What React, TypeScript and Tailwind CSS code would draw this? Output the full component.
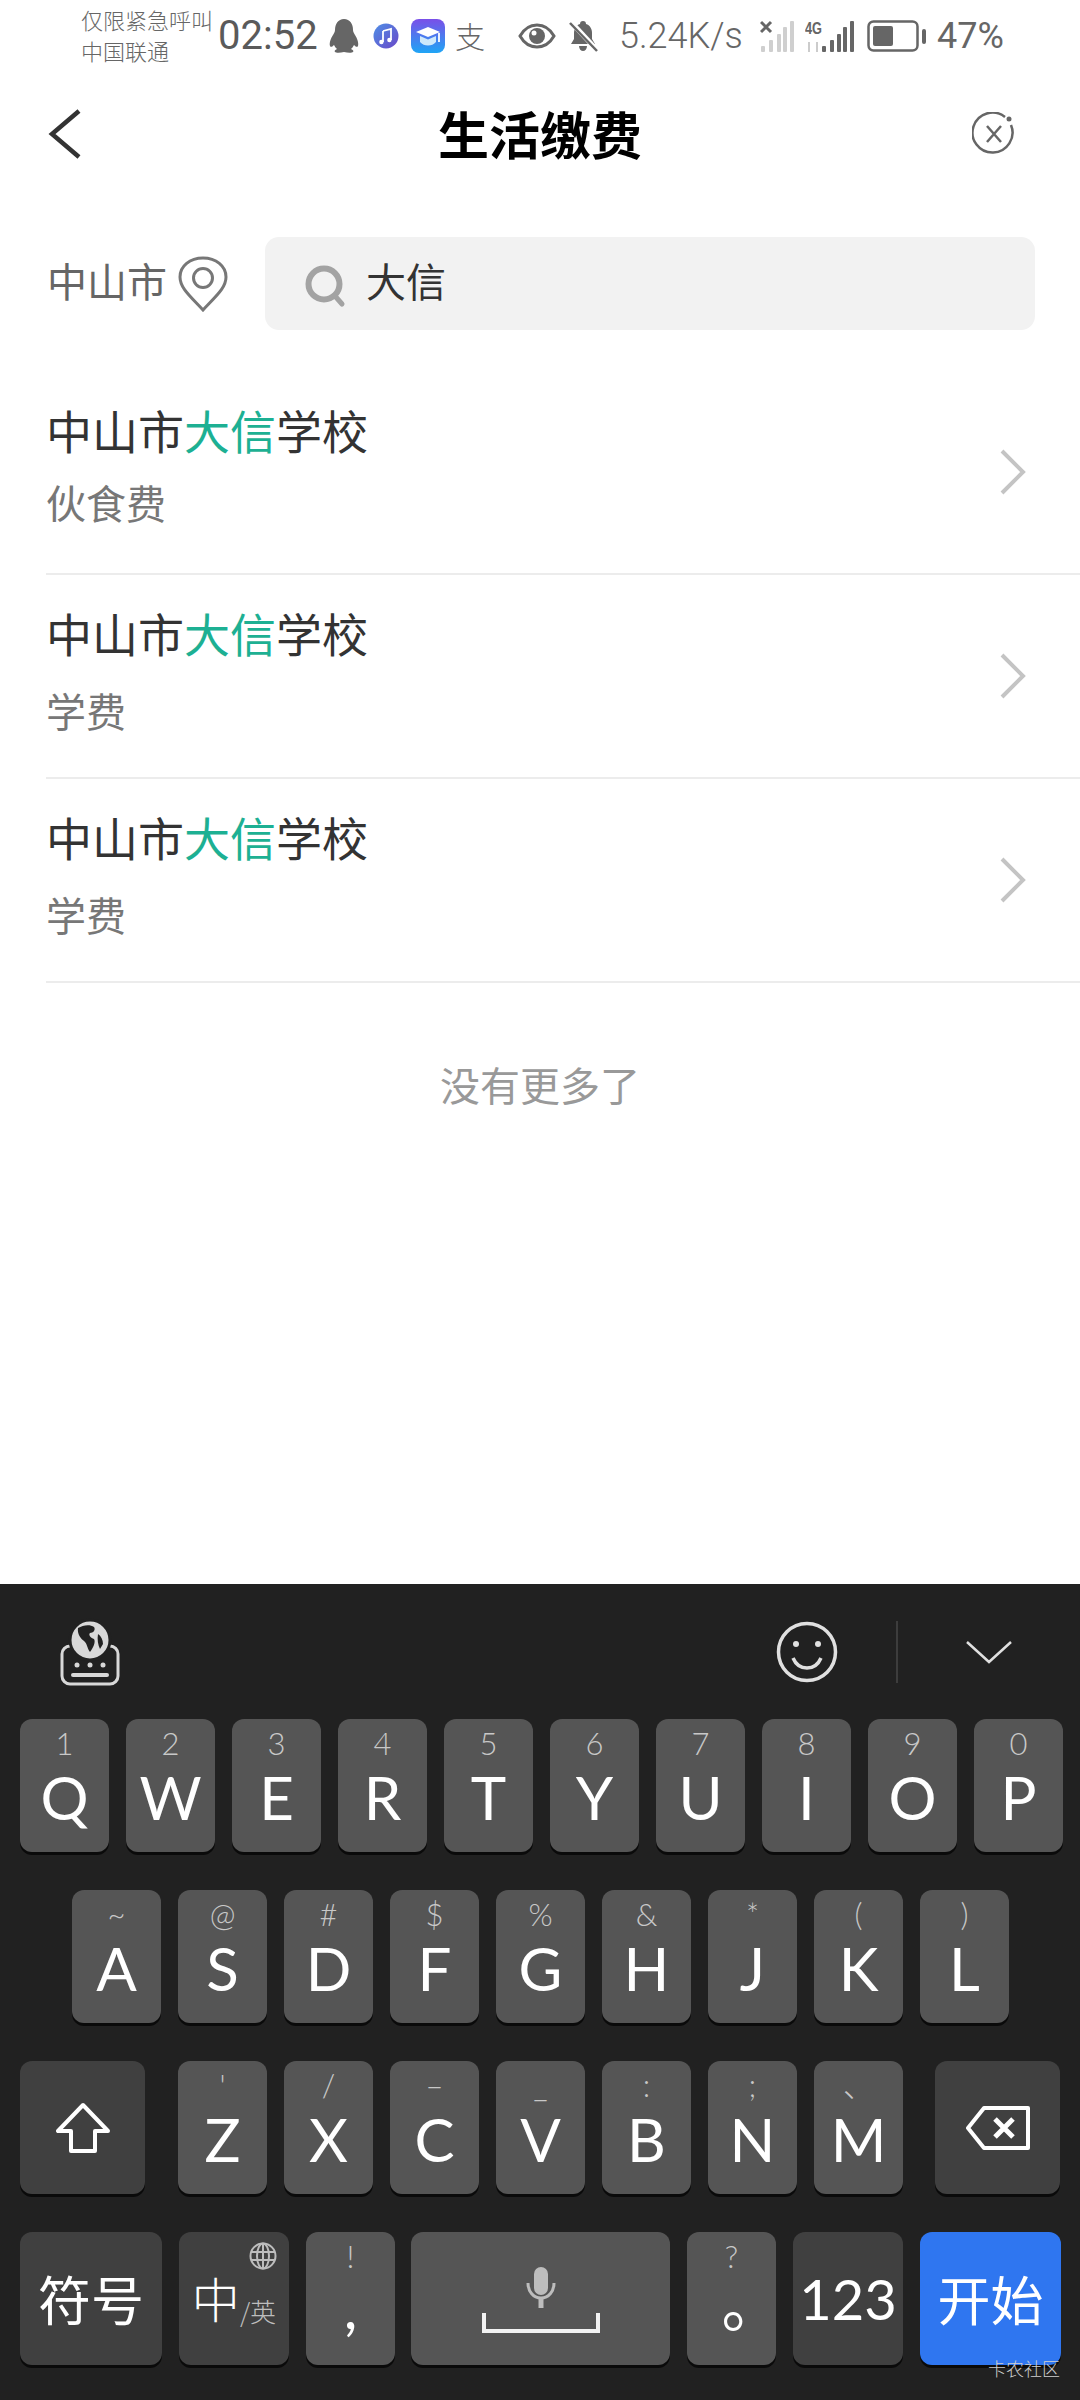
import { ReactNode } from 'react';

const cjk = "font-['Noto_Sans_CJK_SC','Noto_Sans',sans-serif]";
const latin = "font-['Lato','Noto_Sans_CJK_SC',sans-serif]";

const results = [
  { sub: '伙食费', top: 'pt-[28px]', subGap: 'mt-[13px]' },
  { sub: '学费', top: 'pt-[27px]', subGap: 'mt-[18px]' },
  { sub: '学费', top: 'pt-[27px]', subGap: 'mt-[18px]' },
];

const row1 = [['1', 'Q'], ['2', 'W'], ['3', 'E'], ['4', 'R'], ['5', 'T'], ['6', 'Y'], ['7', 'U'], ['8', 'I'], ['9', 'O'], ['0', 'P']];
const row2 = [['~', 'A'], ['@', 'S'], ['#', 'D'], ['$', 'F'], ['%', 'G'], ['&', 'H'], ['*', 'J'], ['(', 'K'], [')', 'L']];
const row3 = [["'", 'Z'], ['/', 'X'], ['–', 'C'], ['_', 'V'], [':', 'B'], [';', 'N'], ['、', 'M']];

function LetterKey({ top, main, mainClass = '' }: { top: string; main: string; mainClass?: string }) {
  return (
    <div className={`flex h-[133px] w-[89px] shrink-0 flex-col items-center rounded-[12px] bg-[#555555] shadow-[0_3px_0_#0a0a0a] ${latin}`}>
      <div className="mt-[8px] h-[32px] text-[31px] font-light leading-[32px] text-[#c8c8c8]">{top}</div>
      <div className={`h-[76px] text-[60px] font-normal leading-[76px] text-white ${mainClass}`}>{main}</div>
    </div>
  );
}

function FnKey({ width, children, className = 'bg-[#404040]' }: { width: string; children: ReactNode; className?: string }) {
  return (
    <div className={`relative flex h-[133px] shrink-0 items-center justify-center rounded-[12px] shadow-[0_3px_0_#0a0a0a] ${width} ${className}`}>
      {children}
    </div>
  );
}

function Penguin() {
  return (
    <svg width="30" height="34" viewBox="0 0 30 34" fill="#666">
      <path d="M15 0c-6 0-9 5-9 11 0 2-1 3-2 5-2 3-4 8-3 11 1 2 3 0 4-1 1 2 2 3 3 4-2 1-3 2-2 3 1 1 5 1 9 0 4 1 8 1 9 0 1-1 0-2-2-3 1-1 2-2 3-4 1 1 3 3 4 1 1-3-1-8-3-11-1-2-2-3-2-5 0-6-3-11-9-11z" />
    </svg>
  );
}

function MusicIcon() {
  return (
    <svg width="26" height="28" viewBox="0 0 26 28">
      <defs>
        <linearGradient id="mus" x1="0" y1="0" x2="1" y2="1">
          <stop offset="0" stopColor="#4f8fe6" />
          <stop offset="1" stopColor="#6a48c8" />
        </linearGradient>
      </defs>
      <circle cx="13" cy="14" r="12.5" fill="url(#mus)" />
      <path d="M10 9l8-2v11" stroke="#fff" strokeWidth="1.8" fill="none" />
      <path d="M10 9v11" stroke="#fff" strokeWidth="1.8" fill="none" />
      <circle cx="8.4" cy="20" r="2.2" fill="#fff" />
      <circle cx="16.4" cy="18" r="2.2" fill="#fff" />
    </svg>
  );
}

function CapIcon() {
  return (
    <svg width="34" height="34" viewBox="0 0 34 34">
      <defs>
        <linearGradient id="cap" x1="0" y1="0" x2="0" y2="1">
          <stop offset="0" stopColor="#7a4fe8" />
          <stop offset="1" stopColor="#1fa5f5" />
        </linearGradient>
      </defs>
      <rect width="34" height="34" rx="8" fill="url(#cap)" />
      <path d="M5 13l12-5 12 5-12 5z" fill="#fff" />
      <path d="M9 17v6c2 2.500 5 3.500 8 3.500s6-1 8-3.500v-6l-8 3.500z" fill="#cfe9fb" />
      <path d="M28 14v9" stroke="#fff" strokeWidth="1.800" />
    </svg>
  );
}

function EyeIcon() {
  return (
    <svg width="38" height="26" viewBox="0 0 38 26">
      <path d="M2 13C6 6 12 2 19 2s13 4 17 11c-4 7-10 11-17 11S6 20 2 13z" fill="none" stroke="#666" strokeWidth="3" />
      <circle cx="19" cy="13" r="8" fill="#666" />
      <circle cx="16" cy="10" r="2.500" fill="#fff" />
    </svg>
  );
}

function BellOff() {
  return (
    <svg width="30" height="32" viewBox="0 0 30 32" fill="#666">
      <path d="M15 1c-2 0-3 1-3 3-4 1-6 5-6 9v6l-3 5h24l-3-5v-6c0-4-2-8-6-9 0-2-1-3-3-3z" />
      <path d="M11 26c0 3 2 5 4 5s4-2 4-5z" />
      <path d="M3 2l26 28" stroke="#fff" strokeWidth="5" />
      <path d="M2 3l27 28" stroke="#666" strokeWidth="2.500" />
    </svg>
  );
}

function SimOne() {
  return (
    <svg width="35" height="32" viewBox="0 0 35 32" fill="#cfcfcf">
      <path d="M1 2l10 10M11 2L1 12" stroke="#666" strokeWidth="3" />
      <rect x="1" y="26" width="4" height="6" rx="1" />
      <rect x="9" y="20" width="4" height="12" rx="1" />
      <rect x="17" y="14" width="4" height="18" rx="1" />
      <rect x="23" y="7" width="4" height="25" rx="1" />
      <rect x="30" y="1" width="4" height="31" rx="1" />
    </svg>
  );
}

function SimTwo() {
  return (
    <svg width="50" height="32" viewBox="0 0 50 32" fill="#666">
      <text x="0" y="14" fontSize="16" fontWeight="700" textLength="17" lengthAdjust="spacingAndGlyphs" fontFamily="Liberation Sans">4G</text>
      <path d="M4 22v10M12 22v10" stroke="#ccc" strokeWidth="2" />
      <rect x="17" y="26" width="4" height="6" rx="1" />
      <rect x="25" y="20" width="4" height="12" rx="1" />
      <rect x="32" y="14" width="4" height="18" rx="1" />
      <rect x="38" y="7" width="4" height="25" rx="1" />
      <rect x="45" y="1" width="4" height="31" rx="1" />
    </svg>
  );
}

function Battery() {
  return (
    <svg width="60" height="32" viewBox="0 0 60 32">
      <rect x="1.500" y="1.500" width="49" height="29" rx="5" fill="none" stroke="#666" strokeWidth="2.500" />
      <rect x="6" y="6" width="20" height="20" rx="2" fill="#666" />
      <rect x="55" y="9" width="4" height="15" rx="2" fill="#666" />
    </svg>
  );
}

function SearchGlass() {
  return (
    <svg width="42" height="44" viewBox="0 0 42 44" fill="none">
      <circle cx="19" cy="19" r="15.500" stroke="#a3a3a3" strokeWidth="6" />
      <path d="M30 31l7 8" stroke="#a3a3a3" strokeWidth="5" strokeLinecap="round" />
    </svg>
  );
}

function Pin() {
  return (
    <svg width="50" height="56" viewBox="0 0 50 56" fill="none" stroke="#777" strokeWidth="3">
      <path d="M25 54C12 40 2 32 2 21 2 10 12 2 25 2s23 8 23 19c0 11-10 19-23 33z" />
      <circle cx="25" cy="22" r="9.500" />
    </svg>
  );
}

function GlobeKeyboard() {
  return (
    <svg width="60" height="68" viewBox="0 0 60 68">
      <rect x="2" y="28" width="56" height="38" rx="8" fill="none" stroke="#d8d8d8" strokeWidth="3" />
      <circle cx="30" cy="22" r="20" fill="#d8d8d8" stroke="#212121" strokeWidth="3" />
      <path d="M18 10c5-3 12-4 16-1 2 3-1 6-4 6-2 2 1 5 4 6 2 3-1 9-4 13-3-4-3-9-6-11-3-2-7-7-6-13zM38 16c3 2 5 6 5 10l-3 5c-2-4-3-10-2-15z" fill="#212121" />
      <circle cx="17" cy="47" r="2.500" fill="#d8d8d8" />
      <circle cx="30" cy="47" r="2.500" fill="#d8d8d8" />
      <circle cx="43" cy="47" r="2.500" fill="#d8d8d8" />
      <rect x="11" y="55" width="38" height="4" rx="2" fill="#d8d8d8" />
    </svg>
  );
}

function Globe() {
  return (
    <svg width="28" height="28" viewBox="0 0 28 28" fill="none" stroke="#bdbdbd" strokeWidth="2">
      <circle cx="14" cy="14" r="12.500" />
      <ellipse cx="14" cy="14" rx="6" ry="12.500" />
      <path d="M14 1.500v25M2 10h24M2 18h24" />
    </svg>
  );
}

export default function App() {
  return (
    <div className={`flex h-[2400px] w-[1080px] flex-col overflow-hidden bg-white ${cjk}`}>
      <div className="flex h-[1584px] flex-col">
        {/* status bar */}
        <div className="flex h-[80px] text-[#666]">
          <div className="mt-[4px] w-[218px] pl-[81px] text-[22px] font-light leading-[31px] whitespace-nowrap">
            <div>仅限紧急呼叫</div>
            <div>中国联通</div>
          </div>
          <div className="flex h-[72px] items-center">
            <span className="w-[111px] font-['Roboto',sans-serif] text-[40px] text-[#5a5a5a]">02:52</span>
            <Penguin />
            <span className="ml-[14px]"><MusicIcon /></span>
            <span className="ml-[12px]"><CapIcon /></span>
            <span className="ml-[10px] -mt-[3px] w-[32px] text-[30px] font-light leading-none">支</span>
            <span className="ml-[31px]"><EyeIcon /></span>
            <span className="ml-[12px]"><BellOff /></span>
            <span className="ml-[21px] w-[120px] font-['Roboto',sans-serif] text-[36px] font-light">5.24K/s</span>
            <span className="ml-[21px]"><SimOne /></span>
            <span className="ml-[10px]"><SimTwo /></span>
            <span className="ml-[12px]"><Battery /></span>
            <span className="ml-[10px] font-['Roboto',sans-serif] text-[36px]">47%</span>
          </div>
        </div>

        {/* title */}
        <div className="flex h-[108px] items-center justify-between pl-[48px] pr-[64px]">
          <div className="w-[96px]">
            <svg width="34" height="50" viewBox="0 0 34 50" fill="none" stroke="#333" strokeWidth="4.500">
              <path d="M31 2L4 25l27 23" />
            </svg>
          </div>
          <h1 className="-mt-[2px] text-[51px] font-bold text-black">生活缴费</h1>
          <div className="flex w-[80px] justify-end">
            <svg width="44" height="44" viewBox="0 0 44 44" fill="none" stroke="#666" strokeWidth="2.500">
              <path d="M33 5a20 20 0 1 0 6 8" />
              <circle cx="37" cy="7" r="2.500" fill="#666" stroke="none" />
              <path d="M15 14l14 16M29 14L15 30" />
            </svg>
          </div>
        </div>

        {/* search */}
        <div className="mt-[49px] flex h-[93px] items-center pl-[47px]">
          <span className="-mt-[8px] text-[40px] text-[#666]">中山市</span>
          <span className="ml-[11px] mt-[1px]"><Pin /></span>
          <div className="ml-[37px] flex h-[93px] w-[770px] items-center rounded-[14px] bg-[#f2f2f2] pl-[40px]">
            <span className="mt-[6px]"><SearchGlass /></span>
            <span className="ml-[19px] -mt-[8px] text-[40px] text-[#333]">大信</span>
          </div>
        </div>

        {/* results */}
        <div className="mt-[41px] pl-[46px]">
          {results.map((r, i) => (
            <div key={i} className="flex h-[204px] items-center justify-between border-b-2 border-[#ececec] pr-[53px]">
              <div className={`self-start ${r.top}`}>
                <div className="text-[46px] leading-[60px] text-[#333]">
                  中山市<span className="text-[#1db093]">大信</span>学校
                </div>
                <div className={`${r.subGap} text-[40px] leading-[60px] text-[#777]`}>{r.sub}</div>
              </div>
              <svg width="28" height="46" viewBox="0 0 28 46" fill="none" stroke="#c4c4c4" strokeWidth="4">
                <path d="M3 2l21 21L3 44" />
              </svg>
            </div>
          ))}
        </div>

        <div className="mt-[71px] text-center text-[40px] leading-[60px] text-[#999]">没有更多了</div>
      </div>

      {/* keyboard */}
      <div className="relative flex flex-1 flex-col bg-[#212121]">
        <div className="flex h-[135px] items-center pl-[60px] pr-[68px]">
          <GlobeKeyboard />
          <svg className="ml-auto" width="62" height="62" viewBox="0 0 62 62" fill="none" stroke="#e0e0e0" strokeWidth="3.500">
            <circle cx="31" cy="31" r="28.500" />
            <circle cx="20" cy="23" r="3" fill="#e0e0e0" stroke="none" />
            <circle cx="42" cy="23" r="3" fill="#e0e0e0" stroke="none" />
            <path d="M17 37c3 7 8 10 14 10s11-3 14-10" />
          </svg>
          <div className="ml-[58px] h-[62px] w-[2px] bg-[#3d3d3d]" />
          <svg className="ml-[68px]" width="46" height="24" viewBox="0 0 46 24" fill="none" stroke="#e0e0e0" strokeWidth="2.500">
            <path d="M1 2l22 20L45 2" />
          </svg>
        </div>

        <div className="flex flex-col gap-[38px] px-[20px]">
          <div className="flex gap-[17px]">
            {row1.map(([t, m]) => <LetterKey key={m} top={t} main={m} />)}
          </div>
          <div className="flex gap-[17px] pl-[52px]">
            {row2.map(([t, m]) => <LetterKey key={m} top={t} main={m} />)}
          </div>
          <div className="flex gap-[17px]">
            <FnKey width="w-[125px] mr-[16px]">
              <svg width="54" height="52" viewBox="0 0 54 52" fill="none" stroke="#fff" strokeWidth="4" strokeLinejoin="round">
                <path d="M27 3L2 29h13v20h24V29h13z" />
              </svg>
            </FnKey>
            {row3.map(([t, m]) => <LetterKey key={m} top={t} main={m} />)}
            <FnKey width="w-[125px] ml-[15px]">
              <svg width="64" height="44" viewBox="0 0 64 44" fill="none" stroke="#fff" strokeWidth="4" strokeLinejoin="round">
                <path d="M18 2h44v40H18L2 22z" />
                <path d="M29 13l18 18M47 13L29 31" strokeWidth="5" />
              </svg>
            </FnKey>
          </div>
          <div className="flex gap-[17px]">
            <FnKey width="w-[142px]">
              <span className="text-[53px] leading-none text-white">符号</span>
            </FnKey>
            <FnKey width="w-[110px]">
              <span className="absolute right-[12px] top-[10px]"><Globe /></span>
              <span className="-mt-[4px] flex items-end text-white">
                <span className="text-[48px] font-light leading-[60px]">中</span>
                <span className="-mb-[2px] text-[26px] font-light leading-[36px] text-[#bdbdbd]">/英</span>
              </span>
            </FnKey>
            <LetterKey top="!" main="," mainClass="-translate-y-[4px]" />
            <div className="-ml-[1px] flex h-[133px] w-[259px] shrink-0 flex-col items-center rounded-[12px] bg-[#555555] pt-[35px] shadow-[0_3px_0_#0a0a0a]">
              <svg width="30" height="46" viewBox="0 0 30 46" fill="none">
                <rect x="8" y="0" width="14" height="28" rx="7" fill="#bdbdbd" />
                <path d="M2 16c0 8 5 15 13 15s13-7 13-15" stroke="#bdbdbd" strokeWidth="3" />
                <path d="M15 31v10" stroke="#bdbdbd" strokeWidth="5" />
              </svg>
              <div className="h-[20px] w-[118px] border-x-[4px] border-b-[4px] border-[#f2f2f2]" />
            </div>
            <LetterKey top="?" main="。" mainClass="translate-x-[20px] -translate-y-[6px]" />
            <FnKey width="w-[110px]">
              <span className={`text-[56px] leading-none text-white ${latin}`}>123</span>
            </FnKey>
            <FnKey width="w-[141px]" className="bg-[#2f76f0]">
              <span className="text-[53px] leading-none text-white">开始</span>
            </FnKey>
          </div>
        </div>

        {/* watermark */}
        <span className="absolute bottom-[20px] right-[20px] text-[18px] font-light leading-[24px] text-[#cfcfcf]">卡农社区</span>
      </div>
    </div>
  );
}
